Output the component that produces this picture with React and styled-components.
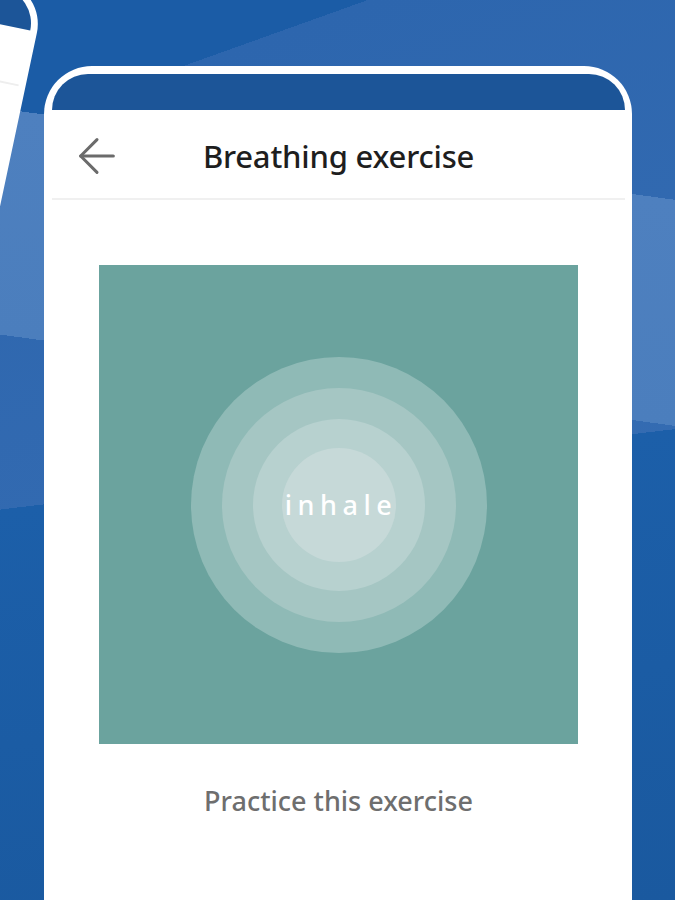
import React from "react"
import styled, { createGlobalStyle } from "styled-components"
import { ArrowLeft } from "lucide-react"

const GlobalStyle = createGlobalStyle`
  html, body {
    margin: 0;
    padding: 0;
    overflow: hidden;
  }
  body {
    font-family: "Noto Sans", "Liberation Sans", sans-serif;
  }
`;

// backdrop bands are drawn as hard-stop gradients, sized for the 675x900 page
const Page = styled.div`
  position: relative;
  width: 675px;
  height: 900px;
  overflow: hidden;
  box-sizing: border-box;
  padding: 66px 43px 0 44px;
  background-color: #1b5ca6;
  background-image:
    linear-gradient(187.7deg, transparent 198px, #4e80bf 198px, #4b7ebd 422px, transparent 422px),
    linear-gradient(173.2deg, transparent 506px, #1c5fa9 506px, #1a599f 100%),
    linear-gradient(160.3deg, transparent 124px, #2d66ae 124px, #3a70b5 100%);
`;

const BackPhone = styled.div`
  position: absolute;
  top: -10px;
  left: -254px;
  width: 300px;
  height: 640px;
  box-sizing: border-box;
  padding: 7px;
  background: #fff;
  border-radius: 44px;
  transform: rotate(12deg);
  transform-origin: top right;
`;

const BackStatus = styled.div`
  height: 36px;
  background: #1c5598;
  border-radius: 37px 37px 0 0;
`;

const BackDivider = styled.div`
  margin-top: 55px;
  height: 2px;
  background: #eeeeee;
`;

const Phone = styled.div`
  position: relative;
  height: 860px;
  box-sizing: border-box;
  padding: 8px 7px 0 8px;
  background: #fff;
  border-radius: 48px 48px 0 0;
  display: flex;
  flex-direction: column;
`;

const StatusBar = styled.div`
  height: 36px;
  flex-shrink: 0;
  background: #1c5598;
  border-radius: 40px 40px 0 0;
`;

const Header = styled.header`
  height: 88px;
  display: grid;
  grid-template-columns: 1fr auto 1fr;
  align-items: center;
  border-bottom: 2px solid #f0f0f0;
`;

const BackButton = styled.button`
  justify-self: start;
  display: flex;
  align-items: center;
  margin: 4px 0 0 17px;
  padding: 0;
  border: none;
  background: none;
  color: #6b6b6b;
`;

const Title = styled.h1`
  margin: 4px 0 0;
  font-size: 31px;
  font-weight: 500;
  color: #1e1e1e;
  letter-spacing: -0.2px;
`;

const Content = styled.main`
  display: flex;
  flex-direction: column;
  align-items: center;
  padding-top: 65px;
`;

const Stage = styled.div`
  width: 479px;
  height: 479px;
  background: #6ba39e;
  display: flex;
  align-items: center;
  justify-content: center;
`;

const Ring = styled.div`
  width: ${p => p.size}px;
  height: ${p => p.size}px;
  border-radius: 50%;
  background: ${p => p.fill};
  display: flex;
  align-items: center;
  justify-content: center;
`;

const Cue = styled.span`
  font-size: 27px;
  font-weight: 500;
  color: #fff;
  letter-spacing: 5.5px;
  padding-left: 5px;
`;

const Practice = styled.button`
  margin-top: 38px;
  padding: 0;
  border: none;
  background: none;
  font-family: inherit;
  font-size: 27px;
  font-weight: 500;
  color: #6e6e6e;
`;

const rings = [
  { size: 296, fill: "#8fbab6" },
  { size: 234, fill: "#a5c6c3" },
  { size: 172, fill: "#b7d1cf" },
  { size: 114, fill: "#c6d9d8" },
]

function Breather({ children, level = 0 }) {
  if (level >= rings.length) return children
  const r = rings[level]
  return (
    <Ring size={r.size} fill={r.fill}>
      <Breather level={level + 1}>{children}</Breather>
    </Ring>
  )
}

export default function App() {
  return (
    <Page>
      <GlobalStyle />
      <BackPhone>
        <BackStatus />
        <BackDivider />
      </BackPhone>
      <Phone>
        <StatusBar />
        <Header>
          <BackButton aria-label="Back">
            <ArrowLeft size={56} strokeWidth={1.3} />
          </BackButton>
          <Title>Breathing exercise</Title>
          <span />
        </Header>
        <Content>
          <Stage>
            <Breather>
              <Cue>inhale</Cue>
            </Breather>
          </Stage>
          <Practice>Practice this exercise</Practice>
        </Content>
      </Phone>
    </Page>
  )
}
